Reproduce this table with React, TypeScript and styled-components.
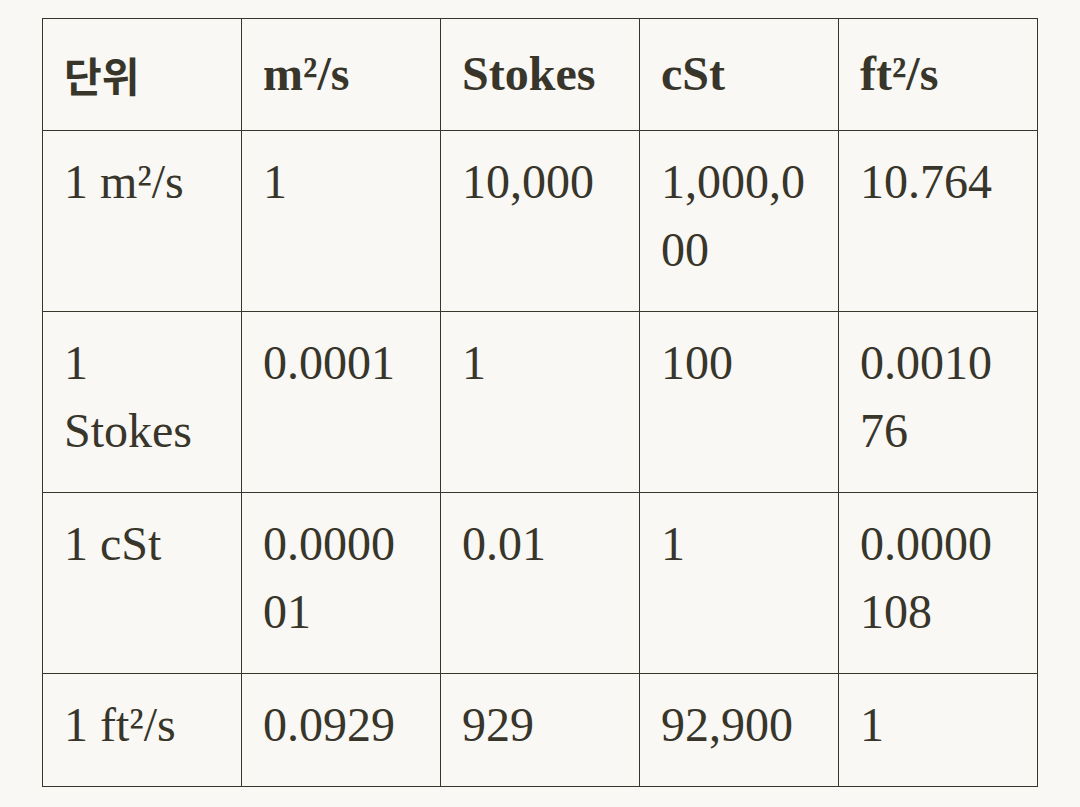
import React from "react";
import styled, { createGlobalStyle } from "styled-components";

const GlobalStyle = createGlobalStyle`
  html, body {
    margin: 0;
    padding: 0;
    background: #f9f8f4;
  }
  body {
    font-family: "Liberation Serif", "Noto Sans CJK KR", serif;
    color: #38352a;
  }
`;

const Page = styled.div`
  padding: 18px 42px;
  background: #f9f8f4;
  min-height: 100vh;
  box-sizing: border-box;
`;

const Table = styled.table`
  width: 996px;
  border-collapse: collapse;
  table-layout: fixed;
  font-family: "Liberation Serif", "Noto Sans CJK KR", serif;
  font-size: 48px;
  line-height: 68px;
  color: #38352a;
`;

const HeadCell = styled.th`
  border: 1px solid #38352a;
  padding: 21px 20px 20px 21px;
  text-align: left;
  vertical-align: top;
  font-weight: 700;
`;

const KoreanLabel = styled.span`
  font-family: "Noto Sans CJK KR", sans-serif;
  font-size: 41px;
  font-weight: 700;
  line-height: 68px;
`;

const Cell = styled.td`
  border: 1px solid #38352a;
  padding: 17px 20px 27px 21px;
  text-align: left;
  vertical-align: top;
  font-weight: 400;
  white-space: pre-line;
`;

const headers = ["단위", "m²/s", "Stokes", "cSt", "ft²/s"];

const rows: string[][] = [
  ["1 m²/s", "1", "10,000", "1,000,0\n00", "10.764"],
  ["1\nStokes", "0.0001", "1", "100", "0.0010\n76"],
  ["1 cSt", "0.0000\n01", "0.01", "1", "0.0000\n108"],
  ["1 ft²/s", "0.0929", "929", "92,900", "1"],
];

export default function App() {
  return (
    <>
      <GlobalStyle />
      <Page>
        <Table>
          <thead>
            <tr>
              {headers.map((h, i) => (
                <HeadCell key={h}>
                  {i === 0 ? <KoreanLabel>{h}</KoreanLabel> : h}
                </HeadCell>
              ))}
            </tr>
          </thead>
          <tbody>
            {rows.map((r, i) => (
              <tr key={i}>
                {r.map((c, j) => (
                  <Cell key={j}>{c}</Cell>
                ))}
              </tr>
            ))}
          </tbody>
        </Table>
      </Page>
    </>
  );
}
